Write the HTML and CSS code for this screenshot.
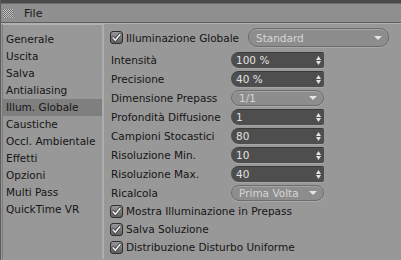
FILE: index.html
```html
<!DOCTYPE html>
<html lang="it">
<head>
  <meta charset="UTF-8" />
  <title>Impostazioni di Rendering</title>
  <link rel="stylesheet" href="styles.css">
</head>
<body>
  <div class="window">
    <div class="titlebar"></div>
    <div class="menubar">
      <span class="grip"></span>
      <span class="menu">File</span>
    </div>

    <div class="main">
      <ul class="sidebar">
        <li>Generale</li>
        <li>Uscita</li>
        <li>Salva</li>
        <li>Antialiasing</li>
        <li class="active">Illum. Globale</li>
        <li>Caustiche</li>
        <li>Occl. Ambientale</li>
        <li>Effetti</li>
        <li>Opzioni</li>
        <li>Multi Pass</li>
        <li>QuickTime VR</li>
      </ul>

      <div class="settings">
        <div class="head">
          <label class="check">
            <svg class="box" width="13" height="13" viewBox="0 0 13 13"><defs><linearGradient id="cb" x1="0" y1="0" x2="0" y2="1"><stop offset="0" stop-color="#9a9a9a"/><stop offset="1" stop-color="#5e5e5e"/></linearGradient></defs><rect x="0.5" y="0.5" width="12" height="12" rx="2.5" fill="url(#cb)" stroke="#2e2e2e"/><path d="M3 6.8 L5.3 9.3 L10 3.4" fill="none" stroke="#333" stroke-width="3" stroke-linecap="round" stroke-linejoin="round"/><path d="M3 6.8 L5.3 9.3 L10 3.4" fill="none" stroke="#f2f2f2" stroke-width="1.6" stroke-linecap="round" stroke-linejoin="round"/></svg>
            Illuminazione Globale
          </label>
          <div class="select wide">Standard<span class="caret"></span></div>
        </div>

        <div class="form">
          <span class="label">Intensità</span>
          <div class="field">100 %<svg class="spin" width="5" height="9" viewBox="0 0 5 9"><path d="M0 4 L2.5 0 L5 4 Z M0 5 L5 5 L2.5 9 Z" fill="#e4e4e4"/></svg></div>

          <span class="label">Precisione</span>
          <div class="field">40 %<svg class="spin" width="5" height="9" viewBox="0 0 5 9"><path d="M0 4 L2.5 0 L5 4 Z M0 5 L5 5 L2.5 9 Z" fill="#e4e4e4"/></svg></div>

          <span class="label">Dimensione Prepass</span>
          <div class="select">1/1<span class="caret"></span></div>

          <span class="label">Profondità Diffusione</span>
          <div class="field">1<svg class="spin" width="5" height="9" viewBox="0 0 5 9"><path d="M0 4 L2.5 0 L5 4 Z M0 5 L5 5 L2.5 9 Z" fill="#e4e4e4"/></svg></div>

          <span class="label">Campioni Stocastici</span>
          <div class="field">80<svg class="spin" width="5" height="9" viewBox="0 0 5 9"><path d="M0 4 L2.5 0 L5 4 Z M0 5 L5 5 L2.5 9 Z" fill="#e4e4e4"/></svg></div>

          <span class="label">Risoluzione Min.</span>
          <div class="field">10<svg class="spin" width="5" height="9" viewBox="0 0 5 9"><path d="M0 4 L2.5 0 L5 4 Z M0 5 L5 5 L2.5 9 Z" fill="#e4e4e4"/></svg></div>

          <span class="label">Risoluzione Max.</span>
          <div class="field">40<svg class="spin" width="5" height="9" viewBox="0 0 5 9"><path d="M0 4 L2.5 0 L5 4 Z M0 5 L5 5 L2.5 9 Z" fill="#e4e4e4"/></svg></div>

          <span class="label">Ricalcola</span>
          <div class="select">Prima Volta<span class="caret"></span></div>
        </div>

        <div class="checks">
          <label class="check">
            <svg class="box" width="13" height="13" viewBox="0 0 13 13"><rect x="0.5" y="0.5" width="12" height="12" rx="2.5" fill="url(#cb)" stroke="#2e2e2e"/><path d="M3 6.8 L5.3 9.3 L10 3.4" fill="none" stroke="#333" stroke-width="3" stroke-linecap="round" stroke-linejoin="round"/><path d="M3 6.8 L5.3 9.3 L10 3.4" fill="none" stroke="#f2f2f2" stroke-width="1.6" stroke-linecap="round" stroke-linejoin="round"/></svg>
            Mostra Illuminazione in Prepass
          </label>
          <label class="check">
            <svg class="box" width="13" height="13" viewBox="0 0 13 13"><rect x="0.5" y="0.5" width="12" height="12" rx="2.5" fill="url(#cb)" stroke="#2e2e2e"/><path d="M3 6.8 L5.3 9.3 L10 3.4" fill="none" stroke="#333" stroke-width="3" stroke-linecap="round" stroke-linejoin="round"/><path d="M3 6.8 L5.3 9.3 L10 3.4" fill="none" stroke="#f2f2f2" stroke-width="1.6" stroke-linecap="round" stroke-linejoin="round"/></svg>
            Salva Soluzione
          </label>
          <label class="check">
            <svg class="box" width="13" height="13" viewBox="0 0 13 13"><rect x="0.5" y="0.5" width="12" height="12" rx="2.5" fill="url(#cb)" stroke="#2e2e2e"/><path d="M3 6.8 L5.3 9.3 L10 3.4" fill="none" stroke="#333" stroke-width="3" stroke-linecap="round" stroke-linejoin="round"/><path d="M3 6.8 L5.3 9.3 L10 3.4" fill="none" stroke="#f2f2f2" stroke-width="1.6" stroke-linecap="round" stroke-linejoin="round"/></svg>
            Distribuzione Disturbo Uniforme
          </label>
        </div>
      </div>
    </div>
  </div>
</body>
</html>
```

FILE: styles.css
```css
* {
  margin: 0;
  padding: 0;
  box-sizing: border-box;
}
body {
  font-family: 'DejaVu Sans', sans-serif;
  font-size: 10.5px;
  background-color: #989898;
  color: #151515;
  width: 401px;
  height: 260px;
  overflow: hidden;
}
.window {
  height: 260px;
  border-left: 1px solid #5c5c5c;
}
.titlebar {
  height: 4px;
  background: #4a4a4a;
  border-bottom: 1px solid #6a6a6a;
}
.menubar {
  height: 19px;
  display: flex;
  align-items: center;
  background: #8f8f8f;
  border-bottom: 1px solid #5e5e5e;
  box-shadow: 0 1px 0 #b0b0b0;
}
.grip {
  width: 10px;
  height: 9px;
  margin-left: 2px;
  background: repeating-conic-gradient(#c4c4c4 0 25%, #6e6e6e 0 50%) 0 0 / 2px 2px;
}
.menu {
  margin-left: 11px;
  font-size: 11px;
  color: #1a1a1a;
}
.main {
  display: flex;
  height: 236px;
  padding-top: 1px;
}
.sidebar {
  list-style: none;
  width: 102px;
  padding-top: 6px;
  margin-left: 1px;
  border-left: 1px solid #7c7c7c;
  border-right: 2px solid #adadad;
  border-top: 1px solid #b2b2b2;
}
.sidebar li {
  height: 17px;
  line-height: 17px;
  padding-left: 3px;
  white-space: nowrap;
}
.sidebar li.active {
  background: #7f7f7f;
}
.settings {
  padding: 4px 0 0 6px;
}
.head {
  display: flex;
  align-items: center;
  height: 19px;
}
.check {
  display: flex;
  align-items: center;
  gap: 3px;
  white-space: nowrap;
}
.box {
  flex: none;
}
.head .check {
  width: 138px;
}
.form {
  display: grid;
  grid-template-columns: 121px 93px;
  grid-auto-rows: 19px;
  align-items: center;
  margin-top: 3px;
}
.label {
  padding-left: 1px;
  white-space: nowrap;
}
.field {
  height: 16px;
  line-height: 16px;
  padding-left: 5px;
  display: flex;
  justify-content: space-between;
  align-items: center;
  padding-right: 3px;
  background: #4e4e4e;
  color: #e2e2e2;
  border-top: 1px solid #3a3a3a;
  border-radius: 8px 2px 2px 8px;
  box-shadow: 0 1px 0 #a6a6a6;
}
.select {
  height: 16px;
  line-height: 14px;
  padding: 0 6px 0 7px;
  display: flex;
  justify-content: space-between;
  align-items: center;
  background: #8d8d8d;
  color: #d6d6d6;
  border: 1px solid #6c6c6c;
  border-radius: 8px;
  box-shadow: inset 0 1px 0 #a4a4a4, 0 1px 0 #a8a8a8;
}
.select.wide {
  width: 141px;
  height: 19px;
  border-radius: 9px;
}
.caret {
  width: 0;
  height: 0;
  border-left: 4px solid transparent;
  border-right: 4px solid transparent;
  border-top: 4px solid #e4e4e4;
}
.checks .check {
  height: 18px;
}
```
